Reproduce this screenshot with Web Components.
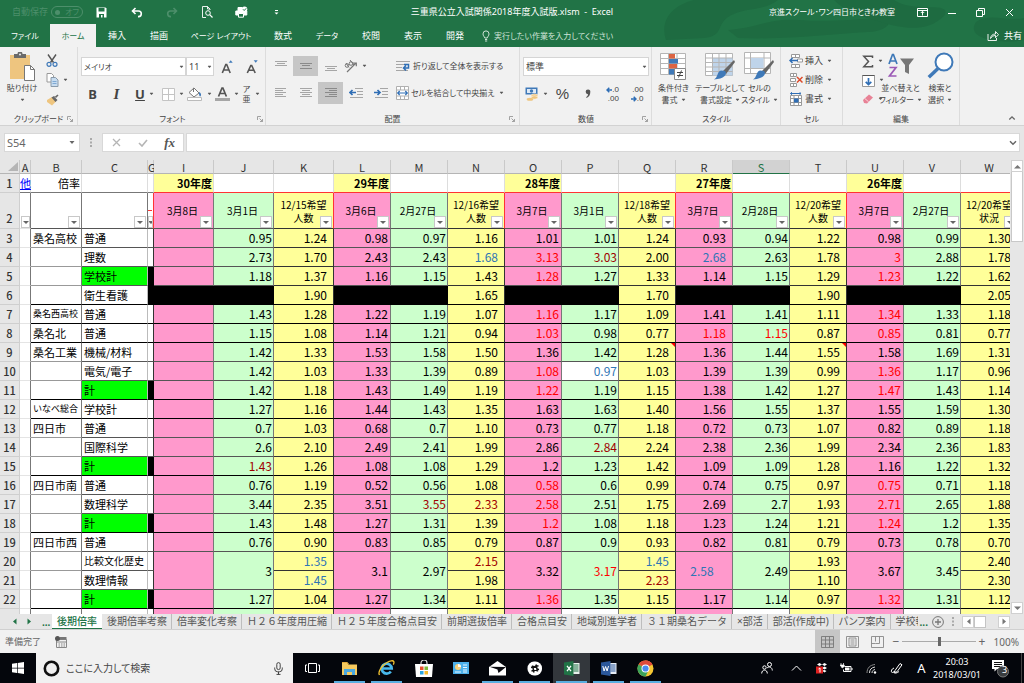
<!DOCTYPE html>
<html lang="ja">
<head>
<meta charset="utf-8">
<title>三重県公立入試関係2018年度入試版.xlsm - Excel</title>
<style>
  html, body { margin: 0; height: 100%; }
  body { overflow: hidden; font-family: "Noto Sans", "Noto Sans CJK JP", sans-serif; font-size: 9px; line-height: 12px; color: #444; font-feature-settings: "palt"; }
</style>
</head>
<body>
<excel-desktop></excel-desktop>
<script>
const BASE = `<style>
*{box-sizing:border-box}
button,input,select{font:inherit;color:inherit;font-feature-settings:inherit;margin:0;padding:0;border:0;background:none;border-radius:0;outline:0;line-height:inherit}
button{display:flex;align-items:center;justify-content:center}
select{appearance:none}
a{color:inherit;text-decoration:none}
x-icon{flex:none}
</style>`;
function define(name, css, html, setup) {
  customElements.define(name, class extends HTMLElement {
    constructor() {
      super();
      this.attachShadow({ mode: 'open' });
    }
    connectedCallback() {
      const markup = typeof html === 'function' ? html(this) : html;
      this.shadowRoot.innerHTML = BASE + `<style>${css}</style>` + markup;
      if (setup) setup(this, this.shadowRoot);
    }
  });
}

/* ---------- icons: [width, height, body] ---------- */
const ln = (ys, g = '#a6a6a6') => ys.map(([a, b, y]) => `<path d="M${a} ${y}.5H${b}" stroke="${g}"/>`).join('');
const ICONS = {
  save: [11, 11, '<path d="M.5.5h9l1 1v9H.5z" fill="#fff"/><path d="M2.500 1h6v3.500h-6zM3 7h5v4H3z" fill="#217346"/><path d="M5 8h1.500v2.500H5z" fill="#fff"/>'],
  undo: [12, 11, '<path d="M4.500 1 1.500 4l3 3M2 4h5.500a2.800 2.800 0 0 1 0 5.600H7" fill="none" stroke="#fff" stroke-width="1.600"/>'],
  redo: [12, 11, '<path d="M7.500 1l3 3-3 3M10 4H4.500a2.800 2.800 0 0 0 0 5.600H5" fill="none" stroke="#4d8f6b" stroke-width="1.600"/>'],
  preview: [12, 12, '<path d="M5 11.500H1.500V.5h5l2.500 2.500v1M6.500.5V3H9" fill="none" stroke="#fff" stroke-width=".9"/><circle cx="7" cy="7" r="2.300" fill="none" stroke="#fff"/><path d="M8.700 8.700l2.800 2.800" stroke="#fff" stroke-width="1.200"/>'],
  print: [13, 12, '<path d="M3 5V1.500h4V5M.8 5h11v4H.8z" fill="#fff" stroke="#fff"/><path d="M3.500 7.500h5v3.700h-5z" fill="#217346" stroke="#fff"/><circle cx="9.500" cy="3.300" r="2.800" fill="#fff"/><path d="M8 3.300l1.200 1.200 2-2.200" fill="none" stroke="#217346"/>'],
  more: [7, 7, '<path d="M2 1.500h3" stroke="#fff"/><path d="M1.500 3.500h4l-2 2z" fill="#fff"/>'],
  ribbonopt: [11, 9, '<path d="M.5.5h10v8H.5zM.5 2.500h10M5.500 7.500v-4M3.800 5l1.700-1.700L7.200 5" fill="none" stroke="#fff"/>'],
  min: [9, 9, '<path d="M1 5.500h8" stroke="#fff"/>'],
  restore: [9, 9, '<path d="M.5 2.500h6v6h-6zM2.500 2.500V.5h6v6h-2" fill="none" stroke="#fff"/>'],
  close: [9, 9, '<path d="M1 1l7 7M8 1L1 8" stroke="#fff"/>'],
  lamp: [8, 12, '<path d="M2.800 8C2.500 6.500 1 6 1 3.900a3 3 0 0 1 6 0C7 6 5.500 6.500 5.200 8zM3 9.500h2.200M3 11h2.200" fill="none" stroke="#cfe3d7"/>'],
  share: [12, 11, '<path d="M1 4v6.500h8.500V8M3.500 8.500c.5-3 2-4.500 5-4.500V1.500l3 3.200-3 3V5.500c-2 0-3.800.8-5 3z" fill="none" stroke="#fff" stroke-width=".9"/>'],
  caret: [5, 4, '<path d="M1 1h3L2.500 2.800z" fill="#555" stroke="#555" stroke-width=".5"/>'],
  bigcaret: [6, 5, '<path d="M.5 1h5L3 4z" fill="#666"/>'],
  chev: [8, 6, '<path d="M1 1.300l3 3 3-3" fill="none" stroke="#666" stroke-width="1.500"/>'],
  chevup: [8, 6, '<path d="M1.300 4.500l2.700-2.700 2.700 2.700" fill="none" stroke="#666" stroke-width="1.300"/>'],
  launch: [6, 6, '<path d="M.5 4V.5H4M2.500 2.500l3 3M5.500 3v2.500H3" fill="none" stroke="#999" stroke-width=".9"/>'],
  paste: [26, 29, '<path d="M1 3h20v24H1z" fill="#eec57f"/><path d="M5 2h3.500a2.500 2.500 0 0 1 5 0H17v4H5z" fill="#6a6a6a"/><circle cx="11" cy="2.500" r="1" fill="#f1f1f1"/><path d="M15.500 13.500h6l4 4v11h-10z" fill="#fff" stroke="#777"/><path d="M21.500 13.500v4h4" fill="none" stroke="#777"/>'],
  cut: [12, 13, '<path d="M2 .5l5.500 8M10 .5L4.500 8.500" stroke="#555" stroke-width="1.400"/><circle cx="3" cy="10.300" r="2" fill="none" stroke="#3f79b8" stroke-width="1.200"/><circle cx="9" cy="10.300" r="2" fill="none" stroke="#3f79b8" stroke-width="1.200"/>'],
  copy: [13, 14, '<path d="M1 .5h4.500l2 2V9H1z" fill="#fff" stroke="#999"/><path d="M5 4.500h4.500l2.500 2.500v6.500H5z" fill="#c7dcf0" stroke="#8a9aa9"/><path d="M6.500 8.500h4M6.500 10.500h4" stroke="#7fa9d3"/>'],
  brush: [13, 12, '<path d="M1 6l5-3 4 4.500L6 11.500 1 8z" fill="#eec57f"/><path d="M5.500 3.500L8 2l2 2 2.500-2.500-1-1L8.500 3l3 3-2 2z" fill="#666"/>'],
  growA: [12, 14, '<path d="M1.300 13L4.800 4.500h.9L9.200 13M2.500 10h5.500" fill="none" stroke="#555" stroke-width="1.600"/><path d="M7.700 2.800l2-2.500 2 2.500z" fill="#3f79b8"/>'],
  shrinkA: [12, 14, '<path d="M1.300 13L4.800 5.500h.9L9.200 13M2.500 10.300h5.500" fill="none" stroke="#555" stroke-width="1.600"/><path d="M7.700.3h4l-2 2.500z" fill="#3f79b8"/>'],
  borders: [13, 13, '<path d="M.5.5h12v12H.5zM6.500.5v12M.5 6.500h12" fill="#fff" stroke="#c4c4c4"/>'],
  fill: [16, 14, '<path d="M2 5.500L7 1l5 5-5 4z" fill="#fff" stroke="#777"/><path d="M6.500 5V.8" stroke="#777"/><path d="M12 5c2.500 1 2.500 4 1 4.500C12 9 12 7 12 5z" fill="#3f79b8"/><path d="M.5 10.500h14v3H.5z" fill="#fff" stroke="#bbb"/>'],
  fontA: [15, 14, '<path d="M3.500 9.500L7 1h.9l3.500 8.500M4.700 6.500h5.500" fill="none" stroke="#555" stroke-width="1.700"/><path d="M0 11h15v3H0z" fill="#a6a6a6"/>'],
  vtop: [12, 12, ln([[0, 12, 1], [2, 10, 3], [0, 12, 5]])],
  vmid: [12, 12, ln([[0, 12, 3], [2, 10, 5], [0, 12, 8]], '#8a8a8a')],
  vbot: [12, 12, ln([[0, 12, 6], [2, 10, 8], [0, 12, 10]])],
  left: [12, 12, ln([[0, 11, 1], [0, 8, 3], [0, 11, 5], [0, 8, 7], [0, 11, 9]])],
  center: [12, 12, ln([[0, 12, 1], [2, 10, 3], [0, 12, 5], [2, 10, 7], [0, 12, 9]])],
  right: [12, 12, ln([[0, 12, 1], [4, 12, 3], [0, 12, 5], [4, 12, 7], [0, 12, 9]], '#8a8a8a')],
  orient: [14, 14, '<path d="M3 13L12 4M9 4h3.300v3.300" fill="none" stroke="#777" stroke-width="1.200"/><circle cx="3" cy="6.500" r="1.800" fill="none" stroke="#777"/><path d="M5 8.500L2 4M6 1l4 5" stroke="#777"/><circle cx="7" cy="4.500" r="1.800" fill="none" stroke="#777"/>'],
  outdent: [14, 12, ln([[6, 14, 1], [8, 14, 4], [8, 14, 7], [1, 14, 10]]) + '<path d="M1 5.500h6M3.500 3L1 5.500 3.500 8" fill="none" stroke="#2f6eb5" stroke-width="1.700"/>'],
  indent: [14, 12, ln([[6, 14, 1], [8, 14, 4], [8, 14, 7], [1, 14, 10]]) + '<path d="M0 5.500h6M3.500 3L6 5.500 3.500 8" fill="none" stroke="#2f6eb5" stroke-width="1.700"/>'],
  wrap: [15, 12, ln([[0, 14, 1], [0, 8, 4], [0, 6, 7], [0, 12, 10]]) + '<path d="M8 4.500h4.500V8H8M10 5.500L7.500 8 10 10.500" fill="none" stroke="#2f6eb5" stroke-width="1.500"/>'],
  merge: [13, 14, '<path d="M.5.5h12v13H.5zM.5 4h12M.5 10h12M4.500.5V4M8.500.5V4M4.500 10v3.500M8.500 10v3.500" fill="#fff" stroke="#b0b0b0"/><path d="M2 7h9M3.700 5L1.700 7l2 2M9.300 5l2 2-2 2" fill="none" stroke="#2f6eb5" stroke-width="1.200"/>'],
  money: [14, 14, '<path d="M.5.5h12v7H.5z" fill="#3f79b8"/><path d="M2 2h9v4H2z" fill="#dfeaf6"/><circle cx="6.500" cy="4" r="1.700" fill="#3f79b8"/><ellipse cx="9.500" cy="8.500" rx="3.300" ry="1.700" fill="#eec57f" stroke="#fff" stroke-width=".5"/><ellipse cx="9.500" cy="10.500" rx="3.300" ry="1.700" fill="#eec57f" stroke="#fff" stroke-width=".5"/><ellipse cx="5" cy="12.300" rx="3.300" ry="1.500" fill="#eec57f"/>'],
  comma: [8, 12, '<path d="M4 1.500a2.300 2.300 0 0 1 2.300 2.600C6.300 7 5 9 2.500 10l-.3-1C3.500 8.200 4 7.300 4 6.200A2.350 2.350 0 1 1 4 1.500z" fill="#555"/>'],
  arrl: [6, 6, '<path d="M1 3h5M3.300.8L1 3l2.300 2.200" fill="none" stroke="#2f6eb5" stroke-width="1.500"/>'],
  arrr: [6, 6, '<path d="M0 3h5M2.700.8L5 3 2.700 5.200" fill="none" stroke="#2f6eb5" stroke-width="1.500"/>'],
  cond: [27, 28, '<path d="M.5 1.500h25v21H.5zM.5 6.500h25M.5 11.500h25M.5 16.500h25M8.500 1.500v21M17 1.500v21" fill="#fff" stroke="#b5b5b5"/><path d="M9 2h6v4.500H9zM9 12h8v4.500H9z" fill="#dc6443"/><path d="M9 7h9v4.500H9zM9 17h5v5.500H9z" fill="#3f79b8"/><path d="M14.500 16.500h11v11h-11z" fill="#fff" stroke="#888"/><path d="M17 20.500h6M17 23.500h6M21.500 18.500L18.500 25.500" stroke="#444"/>'],
  tbl: [31, 29, '<path d="M.5 1.500h27v22H.5z" fill="#fff" stroke="#b5b5b5"/><path d="M7.500 6h20v17.500h-20z" fill="#bfd4ea"/><path d="M.5 6h27M.5 10.500h27M.5 15h27M.5 19.500h27M7.500 1.500v22M14 1.500v22M21 1.500v22" stroke="#b5b5b5" fill="none"/><path d="M18 19L29 8l1 2-9 12z" fill="#666"/><path d="M20 19c3 3-1 8-11 8.500 4-2 3-8 7-9z" fill="#3f79b8"/>'],
  cellst: [31, 29, '<path d="M.5.5h26v21H.5zM.5 6h26M.5 16.500h26M6.500.5v21M20 .5v21" fill="#fff" stroke="#b5b5b5"/><path d="M7 6h12.500v10H7z" fill="#bfd4ea"/><path d="M18 19L29 8l1 2-9 12z" fill="#666"/><path d="M20 19c3 3-1 8-11 8.500 4-2 3-8 7-9z" fill="#3f79b8"/>'],
  insert: [14, 14, '<path d="M2.500.5h8v3h-8zM6.500.5v3M2.500 10.500h8v3h-8zM6.500 10.500v3M8.500 5h5v3h-5z" fill="#fff" stroke="#999"/><path d="M1 6.500h8M3.500 4L1 6.500 3.500 9" fill="none" stroke="#2f6eb5" stroke-width="1.500"/>'],
  delete: [14, 14, '<path d="M1.500.5h6v3h-6zM4.500.5v3M1.500 10.500h6v3h-6zM4.500 10.500v3M1.500 5.500h5v3h-5z" fill="#fff" stroke="#999"/><path d="M8 4l5.500 5.500M13.500 4L8 9.500" stroke="#dc4b2b" stroke-width="1.500"/>'],
  format: [14, 14, '<path d="M1.500 3.500h11v10h-11zM1.500 6.500h11M1.500 10.500h11M5 3.500v10M9.500 3.500v10" fill="#fff" stroke="#999"/><path d="M5 6.500h4.500v4H5z" fill="#2f6eb5"/><path d="M1.500 1.500h10M3 .2L1.500 1.500 3 2.800M10.500.2L12 1.500l-1.500 1.300" stroke="#2f6eb5" fill="none"/>'],
  sigma: [12, 13, '<path d="M10.500 3V1.200H1.800l4.700 5.300-4.700 5.300h8.700V10" fill="none" stroke="#555" stroke-width="1.500"/>'],
  filldown: [13, 13, '<path d="M.5 1.500h12v11H.5z" fill="#fff" stroke="#999"/><path d="M.5 1.500h12" stroke="#555"/><path d="M6.500 4v6.500M3.700 7.800l2.800 2.700 2.800-2.700" fill="none" stroke="#2f6eb5" stroke-width="1.700"/>'],
  erase: [12, 12, '<path d="M1 7l6-5.500 4 3L5 10.500 2 10z" fill="#e88296"/><path d="M2.800 5.500l3.800 3.300" stroke="#fbd5dc"/>'],
  sort: [28, 28, '<path d="M2 12L5.500 2.500h.9L10 12M3.200 9h5.500" fill="none" stroke="#3f79b8" stroke-width="1.700"/><path d="M2.500 15.500h6.500L2.500 24h7" fill="none" stroke="#9b59b6" stroke-width="1.700"/><path d="M13 6.500h14L22 13v9l-4-2v-7z" fill="#777"/>'],
  find: [27, 27, '<circle cx="17" cy="10" r="8.500" fill="#fff" stroke="#3f79b8" stroke-width="2"/><path d="M11 16.500L1.800 25.300" stroke="#3f79b8" stroke-width="3.500"/>'],
  x: [9, 9, '<path d="M1 1l7 7M8 1L1 8" stroke="#b5b5b5" stroke-width="1.300"/>'],
  check: [10, 8, '<path d="M1 4l3 3 5-6" fill="none" stroke="#b5b5b5" stroke-width="1.600"/>'],
  dots: [2, 9, '<path d="M0 0h2v2H0zM0 3.500h2v2H0zM0 7h2v2H0z" fill="#aaa"/>'],
  filt: [6, 5, '<path d="M0 1h6L3 4z" fill="#666"/>'],
  up: [7, 5, '<path d="M0 4.500h7L3.500 1z" fill="#777"/>'],
  down: [7, 5, '<path d="M0 .5h7L3.500 4z" fill="#777"/>'],
  prev: [5, 7, '<path d="M4.500.5v6L1 3.500z" fill="currentColor"/>'],
  next: [5, 7, '<path d="M.5.5v6L4 3.500z" fill="currentColor"/>'],
  plus: [12, 12, '<circle cx="6" cy="6" r="5.400" fill="none" stroke="#777"/><path d="M3 6h6M6 3v6" stroke="#777" stroke-width="1.300"/>'],
  macro: [12, 12, '<path d="M1.500 3.500h10v8h-10zM1.500 6h10M3.500 8h1.500M6 8h1.500M8.500 8H10M3.500 10h1.500M6 10h1.500M8.500 10H10" fill="none" stroke="#888"/><path d="M4.500 1h7v2.500h-7z" fill="#777"/><circle cx="2.500" cy="2.500" r="2.500" fill="#555"/>'],
  vnormal: [13, 12, '<path d="M.5.5h12v11H.5zM.5 4h12M.5 8h12M4.500.5v11M8.500.5v11" fill="none" stroke="#777" stroke-width=".9"/>'],
  vpage: [13, 12, '<path d="M.5.5h12v11H.5zM3 2h7v8H3zM4.500 4h4M4.500 6h4M4.500 8h4" fill="none" stroke="#888" stroke-width=".9"/>'],
  vbreak: [13, 12, '<path d="M.5.5h12v11H.5zM4.500.5v5M4.500 7.500h4M8.500.5v7M.5 7.500h4" fill="none" stroke="#888" stroke-width=".9"/>'],
  win: [12, 12, '<path d="M0 1.800l5-.7v4.600H0zM5.700 1L12 .1v5.600H5.700zM0 6.400h5V11l-5-.7zM5.700 6.400H12V12l-6.300-.9z" fill="#fff"/>'],
  cortana: [17, 17, '<circle cx="8.500" cy="8.500" r="6.700" fill="none" stroke="#111" stroke-width="2.600"/>'],
  mic: [9, 13, '<rect x="2.800" y=".6" width="3.400" height="7" rx="1.700" fill="none" stroke="#444"/><path d="M.7 5.500v1.300a3 3 0 0 0 3 3h1.600a3 3 0 0 0 3-3V5.500M4.500 10v2.500M2.500 12.400h4" fill="none" stroke="#444"/>'],
  taskview: [15, 12, '<path d="M3.500 1.500h8v9h-8zM2 3H.5v6.500H2M13 3h1.500v6.500H13" fill="none" stroke="#fff"/>'],
  explorer: [17, 15, '<path d="M1 2h5.500l1 1.500H16V14H1z" fill="#f5c95e"/><path d="M1 1.500h5.500L7.500 3" fill="none" stroke="#e0a93b"/><path d="M3 14V8h11v6h-3v-3H6v3z" fill="#4aa8e0"/>'],
  ie: [17, 16, '<path d="M3.300 8.500h10.400A5 5 0 1 0 12.800 11.500" fill="none" stroke="#48b8ec" stroke-width="2.700"/><path d="M1.500 15C-.5 12 4 5 9 2.500 12 .8 15 0 15.800 1.600c.4.800 0 2-.5 3" fill="none" stroke="#f2c230" stroke-width="1.300"/>'],
  store: [18, 17, '<path d="M6 5V3a3 3 0 0 1 6 0v2" fill="none" stroke="#ddd" stroke-width="1.200"/><path d="M0 4h18l-1 13H1z" fill="#fff"/><path d="M5 6.500h3.500V10H5z" fill="#e8502f"/><path d="M9.500 6.500H13V10H9.500z" fill="#7db93a"/><path d="M5 11h3.500v3.500H5z" fill="#2ca4e0"/><path d="M9.500 11H13v3.500H9.500z" fill="#f4b92b"/>'],
  card: [16, 12, '<path d="M0 0h16v12H0z" fill="#4db0ea"/><circle cx="5" cy="5" r="3" fill="#f7d17c"/><path d="M5 2a3 3 0 0 1 3 3H5z" fill="#fff"/><path d="M2 10h6M10 3h4M10 5.500h4M10 8h4M10 10h4" stroke="#e8f6ff"/>'],
  mail: [19, 15, '<path d="M1 6l8.500-6L18 6v8.500H1z" fill="#fff"/><path d="M1.500 5.800l16.500.2-7.500 6-1-3.500z" fill="#0a0a10"/>'],
  slack: [16, 15, '<rect x=".5" y=".5" width="14.500" height="14" rx="6.500" fill="#fff"/><path d="M5.500 4.500l1.500 7M9 3.500l1.500 7M4 6.500l7.500-1.700M4.500 10l7.500-1.700" stroke="#111" stroke-width="1.500"/>'],
  excel: [16, 15, '<path d="M8 2h7.500v11H8z" fill="#e8f1ec"/><path d="M9.500 4h5M9.500 6h5M9.500 8h5M9.500 10h5" stroke="#217346"/><path d="M0 1.500L9.500 0v15L0 13.500z" fill="#217346"/><path d="M3 4.800l4 5.400M7 4.800l-4 5.400" stroke="#fff" stroke-width="1.300"/>'],
  word: [16, 15, '<path d="M8 2h7.500v11H8z" fill="#e8edf6"/><path d="M9.500 4h5M9.500 6h5M9.500 8h5M9.500 10h5" stroke="#2b579a"/><path d="M0 1.500L9.500 0v15L0 13.500z" fill="#2b579a"/><path d="M1.800 5l1.300 5 1.500-4.500 1.500 4.500L7.500 5" fill="none" stroke="#fff"/>'],
  chrome: [17, 17, '<circle cx="8.500" cy="8.500" r="8" fill="#f6c733"/><path d="M8.500 8.500L1.570 4.500A8 8 0 0 1 15.430 4.500z" fill="#de4b3b"/><path d="M8.500 8.500L1.570 4.500A8 8 0 0 0 8.500 16.500l3-6z" fill="#3da35a"/><path d="M8.500 4.500h6.930A8 8 0 0 0 8.500.5z" fill="#de4b3b"/><circle cx="8.500" cy="8.500" r="4" fill="#fff"/><circle cx="8.500" cy="8.500" r="3.100" fill="#4a8af0"/>'],
  people: [12, 12, '<circle cx="3.500" cy="5.500" r="1.700" fill="none" stroke="#fff"/><path d="M.7 11.500c0-4.500 5.600-4.500 5.600 0" fill="none" stroke="#fff"/><circle cx="8.500" cy="2.500" r="2" fill="none" stroke="#fff"/><path d="M6 6c2-2 5.300-.8 5.300 2.500" fill="none" stroke="#fff"/>'],
  trayup: [11, 6, '<path d="M1 5.500L5.500 1 10 5.500" fill="none" stroke="#fff"/>'],
  dropbox: [12, 12, '<path d="M1 2.500l2.500-1.500L6 2.500 3.500 4zM6 2.500L8.500 1 11 2.500 8.500 4zM6 6l2.500-1.500L11 6 8.500 7.500zM6 8.500l2.500-.5 2 1-2 1.500z" fill="#fff"/><path d="M0 4.500h7v7H0z" fill="#e02020"/><path d="M2.500 7l1.500-1v4.500" fill="none" stroke="#fff"/>'],
  battery: [13, 10, '<path d="M4.500 3.500H11v5H3.500V6.500" fill="none" stroke="#fff"/><path d="M5 4.500h4.500v3H5zM11.500 5h1v2h-1z" fill="#fff"/><path d="M1 0v2M3.500 0v2M.2 2h4v1.500L2.200 5z" stroke="#fff" fill="#fff" stroke-width=".7"/>'],
  wifi: [11, 11, '<circle cx="9" cy="9.500" r="1.200" fill="#fff"/><path d="M6 10c0-2 1-3 3-3.500M3.500 10c0-3.500 2-5.500 5.500-6" fill="none" stroke="#ddd"/><path d="M1 10C1 5 4 2 9 1.500" fill="none" stroke="#888"/>'],
  pen: [13, 12, '<path d="M5 8.500l5-7 2 1.300-5 7-2.500.7z" fill="none" stroke="#fff"/><path d="M4 6C1 7 .5 10.500 2.500 10.500S5 7.500 4 10c-.5 1.500 3 1.500 5-.5" fill="none" stroke="#fff"/>'],
  notif: [19, 19, '<path d="M1 1h12v9H6l-2.500 2.500V10H1z" fill="#fff"/><path d="M3 3.500h8M3 5.500h8M3 7.500h6" stroke="#111"/><circle cx="12" cy="12.500" r="5.500" fill="#3a3d40" stroke="#777"/>'],
};
define('x-icon', ':host{display:inline-flex}svg{display:block}', el => {
  const [w, h, body] = ICONS[el.getAttribute('name')];
  return `<svg width="${w}" height="${h}" viewBox="0 0 ${w} ${h}" aria-hidden="true">${body}</svg>`;
});
const ic = n => `<x-icon name="${n}"></x-icon>`;

/* ---------- title bar ---------- */
define('title-bar', `
:host{display:grid;grid-template-columns:1fr auto 1fr;align-items:center;height:24px;background:#217346;color:#fff;position:relative}
.art{position:absolute;right:0;top:0}
.l,.r{display:flex;align-items:center;position:relative}
.l{padding-left:12px;color:#4d8f6b}
label{display:flex;align-items:center;gap:3px}
.sw{display:flex;align-items:center;gap:5px;height:12px;border:1px solid #4d8f6b;border-radius:6px;padding:0 3px;font-size:8px}
.sw input{appearance:none;width:5px;height:5px;border-radius:50%;background:#4d8f6b}
.q{display:grid;grid-template-columns:repeat(6,35px);margin-left:1px}
button{height:24px}
.r{justify-content:end;font-size:8px}
.r span{margin-right:13px}
.r button{width:29px;height:22px}
h1{margin:0;font:inherit;position:relative;white-space:pre}
`, `<svg class="art" width="370" height="48" viewBox="0 0 370 48" aria-hidden="true"><g fill="#1e6b41"><path d="M12 40C6 22 16 6 40 0h84c-12 10-30 8-44 14-20 8-8 22-30 24z"/><path d="M74 30c30-2 40-12 70-10s50 0 80-2c20 0 10 14-10 14-40 2-80 8-130 6z"/><path d="M180 0h60c20 14 60 0 50 16-20 20-50 10-70 4s-30-10-40-20zM322 22c14-10 30 0 48-4v22c-20 4-60 0-48-18z"/></g></svg>
<div class="l"><label>自動保存<span class="sw"><input type="checkbox">オフ</span></label>
<div class="q">${['save', 'undo', 'redo', 'preview', 'print', 'more'].map(n => `<button aria-label="${n}">${ic(n)}</button>`).join('')}</div></div>
<h1>三重県公立入試関係2018年度入試版.xlsm  -  Excel</h1>
<div class="r"><span>京進スクール･ワン四日市ときわ教室</span>${['ribbonopt', 'min', 'restore', 'close'].map(n => `<button aria-label="${n}">${ic(n)}</button>`).join('')}</div>`);

define('ribbon-tabs', `
:host{display:block;color:#fff;height:23px;position:relative}
nav{display:flex;height:23px;align-items:stretch}
a{display:flex;align-items:center;justify-content:center;width:42px;white-space:nowrap}
.w,.f,.d,.tell{font-size:8px}
a.w{width:82px}a.f{width:50px}a.d{width:46px}
a.on{background:#f1f1f1;color:#217346}
.tell{width:auto;gap:4px;margin-left:6px;color:#cfe3d7}
.share{width:auto;margin-left:auto;gap:5px;padding-right:2px}
`, `<nav><a class="f" href="#">ファイル</a><a class="d on" href="#">ホーム</a><a href="#">挿入</a><a href="#">描画</a><a class="w" href="#">ページ レイアウト</a><a href="#">数式</a><a class="d" href="#">データ</a><a href="#">校閲</a><a href="#">表示</a><a href="#">開発</a><a class="tell" href="#">${ic('lamp')}実行したい作業を入力してください</a><a class="share" href="#">${ic('share')}共有</a></nav>`);

/* ---------- ribbon ---------- */
define('ribbon-group', `
:host{display:grid;grid-template-rows:64px 14px;border-right:1px solid #dcdcdc;padding-top:1px}
.foot{display:grid;grid-template-columns:1fr auto 1fr;align-items:center;padding:0 4px}
x-icon{grid-column:3;justify-self:end}
span{grid-column:2;color:#444;font-size:8px;white-space:nowrap}
`, el => `<slot></slot><div class="foot"><span>${el.getAttribute('label')}</span>${el.hasAttribute('launch') ? ic('launch') : ''}</div>`);

define('tool-button', `
:host{display:flex}
button{flex:1;gap:2px;white-space:nowrap;padding:0}
:host([on]) button{background:#c6c6c6}
:host([big]) button{flex-direction:column;justify-content:start;gap:0;padding-top:4px;font-size:8px}
.pic{display:flex;height:30px;align-items:start}
.t{display:flex;align-items:center;gap:3px;height:12px}
.drop{margin-left:2px}
`, el => {
  const i = el.getAttribute('icon'), c = el.hasAttribute('drop');
  if (el.hasAttribute('big')) {
    const [a, b] = el.getAttribute('big').split('|');
    return `<button><span class="pic">${ic(i)}</span><span class="t">${a}</span><span class="t">${b || ''}${ic('caret')}</span></button>`;
  }
  return `<button aria-label="${i || ''}">${i ? ic(i) : ''}<slot></slot>${c ? `<x-icon class="drop" name="caret"></x-icon>` : ''}</button>`;
});

define('pick-box', `
:host{display:flex;position:relative;height:19px;background:#fff;border:1px solid #d5d5d5}
select{flex:1;min-width:0;padding-left:2px;font-size:9px}
:host([small]) select{font-size:8px}
x-icon{position:absolute;right:1px;top:7px;pointer-events:none}
`, el => `<select aria-label="${el.getAttribute('label')}"><option>${el.getAttribute('value')}</option></select>${ic('caret')}`);

define('ribbon-bar', `
:host{display:flex;height:79px;background:#f1f1f1;border-bottom:1px solid #d2d2d2;position:relative}
.clip{display:grid;grid-template-columns:44px 31px}
.clip>div{display:grid;grid-template-rows:repeat(3,20px);align-content:center;justify-items:start;padding-left:2px}
.two{display:grid;grid-template-rows:19px 24px;row-gap:6px;padding:9px 3px 0;align-content:start}
.row{display:flex;align-items:stretch}
.al{display:grid;grid-template-columns:repeat(5,25px) 1fr;grid-template-rows:20px 22px;row-gap:6px;padding:8px 3px 0 2px;align-content:start}
.al tool-button{align-self:stretch}
.txt{justify-self:start;margin-left:3px;font-size:8px}
b,i,u{font-size:13px}u{font-weight:bold}i{font-family:"Liberation Serif",serif;font-weight:bold;font-size:15px}
.ruby{display:grid;font-size:8px;line-height:10px;text-align:center}
.dec{display:grid;font-family:"Liberation Sans",sans-serif;font-size:8px;line-height:9px;justify-items:end}
.dec span{display:flex;align-items:center}
.pct{font-size:15px;font-family:"Liberation Sans",sans-serif}
.big{display:flex}
.big tool-button{width:43px}
.rows{display:grid;grid-template-rows:repeat(3,19px);align-content:center;justify-content:start;padding-left:8px}
.rows tool-button{justify-self:start}
.tools{width:36px}
.up{position:absolute;right:8px;bottom:4px}
`, `
<ribbon-group label="クリップボード" launch style="width:78px"><div class="clip"><tool-button icon="paste" big="貼り付け"></tool-button><div><tool-button icon="cut"></tool-button><tool-button icon="copy" drop></tool-button><tool-button icon="brush"></tool-button></div></div></ribbon-group>
<ribbon-group label="フォント" launch style="width:188px"><div class="two">
<div class="row"><pick-box small label="フォント" value="メイリオ" style="width:105px"></pick-box><pick-box label="サイズ" value="11" style="width:28px"></pick-box><tool-button icon="growA" style="width:25px"></tool-button><tool-button icon="shrinkA" style="width:25px"></tool-button></div>
<div class="row"><tool-button style="width:23px"><b>B</b></tool-button><tool-button style="width:25px"><i>I</i></tool-button><tool-button drop style="width:31px"><u>U</u></tool-button><tool-button icon="borders" drop style="width:26px"></tool-button><tool-button icon="fill" drop style="width:27px"></tool-button><tool-button icon="fontA" drop style="width:27px"></tool-button><tool-button drop style="width:22px"><span class="ruby"><span>ア</span><span>亜</span></span></tool-button></div>
</div></ribbon-group>
<ribbon-group label="配置" launch style="width:254px"><div class="al">
<tool-button icon="vtop"></tool-button><tool-button icon="vmid" on></tool-button><tool-button icon="vbot"></tool-button><tool-button icon="orient" drop></tool-button><span></span><tool-button class="txt" icon="wrap">折り返して全体を表示する</tool-button>
<tool-button icon="left"></tool-button><tool-button icon="center"></tool-button><tool-button icon="right" on></tool-button><tool-button icon="outdent"></tool-button><tool-button icon="indent"></tool-button><tool-button class="txt" icon="merge" drop>セルを結合して中央揃え</tool-button>
</div></ribbon-group>
<ribbon-group label="数値" launch style="width:132px"><div class="two">
<pick-box label="表示形式" value="標準"></pick-box>
<div class="row"><tool-button icon="money" drop style="width:27px"></tool-button><tool-button style="width:25px"><span class="pct">%</span></tool-button><tool-button icon="comma" style="width:25px"></tool-button><tool-button style="width:25px"><span class="dec"><span>${ic('arrl')}.0</span><span>.00</span></span></tool-button><tool-button style="width:24px"><span class="dec"><span>.00</span><span>${ic('arrr')}.0</span></span></tool-button></div>
</div></ribbon-group>
<ribbon-group label="スタイル" style="width:129px"><div class="big"><tool-button icon="cond" big="条件付き|書式"></tool-button><tool-button icon="tbl" big="テーブルとして|書式設定"></tool-button><tool-button icon="cellst" big="セルの|スタイル"></tool-button></div></ribbon-group>
<ribbon-group label="セル" style="width:62px"><div class="rows"><tool-button icon="insert" drop>挿入</tool-button><tool-button icon="delete" drop>削除</tool-button><tool-button icon="format" drop>書式</tool-button></div></ribbon-group>
<ribbon-group label="編集" style="width:117px"><div class="big"><div class="rows tools"><tool-button icon="sigma" drop></tool-button><tool-button icon="filldown" drop></tool-button><tool-button icon="erase" drop></tool-button></div><tool-button icon="sort" big="並べ替えと|フィルター"></tool-button><tool-button icon="find" big="検索と|選択" style="width:36px"></tool-button></div></ribbon-group>
<button class="up" aria-label="リボンを折りたたむ">${ic('chevup')}</button>`);

/* ---------- formula bar ---------- */
define('formula-bar', `
:host{display:flex;height:34px;background:#e6e6e6;padding:7px 4px 8px;align-items:stretch}
.name{position:relative;width:76px;background:#fff;border:1px solid #d8d8d8;display:flex}
.name input{width:60px;padding-left:2px;font-size:11px;color:#666}
.name x-icon{position:absolute;right:4px;top:6px}
.dots{align-self:center;margin:0 10px}
.fx{display:flex;width:82px;background:#fff;border:1px solid #d8d8d8}
.fx button{flex:1}
i{font:italic bold 13px "Liberation Serif",serif;color:#555}
.in{flex:1;display:flex;align-items:center;background:#fff;border:1px solid #d8d8d8;margin-left:2px;padding-right:2px}
.in input{flex:1}
`, `<div class="name"><input aria-label="名前ボックス" value="S54">${ic('bigcaret')}</div><x-icon class="dots" name="dots"></x-icon><div class="fx"><button aria-label="キャンセル">${ic('x')}</button><button aria-label="入力">${ic('check')}</button><button aria-label="関数の挿入"><i>fx</i></button></div><div class="in"><input aria-label="数式バー">${ic('chev')}</div>`);

/* ---------- worksheet ---------- */
const COLS = [['A', 11], ['B', 51], ['C', 66], ['G', 6], ['I', 60], ['J', 60], ['K', 60], ...'LMNOPQRSTUVW'.split('').map(c => [c, 57])];
const DATES = ['3月8日', '3月1日', '12/15希望|人数', '3月6日', '2月27日', '12/16希望|人数', '3月7日', '3月1日', '12/18希望|人数', '3月7日', '2月28日', '12/20希望|人数', '3月7日', '2月27日', '12/20希望|状況'];
/* suffixes: r red, d dark red, b blue, w white fill, n note, m merged over two rows, c centred; "#" solid black, "-" blank, "_" covered by a merge */
const ROWS = [
  ['桑名高校', '普通', '- 0.95 1.24 0.98 0.97 1.16 1.01 1.01 1.24 0.93 0.94 1.22 0.98 0.99 1.30'],
  ['', '理数', '- 2.73 1.70 2.43 2.43 1.68b 3.13r 3.03d 2.00 2.68b 2.63 1.78 3r 2.88 1.78'],
  ['', '学校計*', '- 1.18 1.37 1.16 1.15 1.43 1.28r 1.27 1.33 1.14 1.15 1.29 1.23r 1.22 1.62'],
  ['', '衛生看護', '# # 1.90 # # 1.65 # # 1.70 # # 1.90 # # 2.05', 1],
  ['桑名西高校', '普通', '- 1.43 1.28 1.22 1.19 1.07 1.16r 1.17 1.09 1.41 1.41 1.11 1.34r 1.33 1.18', 1],
  ['桑名北', '普通', '- 1.15 1.08 1.14 1.21 0.94 1.03r 0.98 0.77 1.18r 1.15r 0.87 0.85r 0.81 0.77', 1],
  ['桑名工業', '機械/材料', '- 1.42 1.33 1.53 1.58 1.50 1.36 1.42 1.28n 1.36 1.44 1.55n 1.58 1.69 1.31'],
  ['', '電気/電子', '- 1.42 1.03 1.33 1.39 0.89 1.08r 0.97bw 1.03 1.39 1.39 0.99 1.36r 1.17 0.96'],
  ['', '計*', '- 1.42 1.18 1.43 1.49 1.19 1.22r 1.19 1.15 1.38 1.42 1.27 1.47r 1.43 1.14', 1],
  ['いなべ総合', '学校計', '- 1.27 1.16 1.44 1.43 1.35 1.63 1.63 1.40 1.56 1.55 1.37 1.55 1.59 1.30', 1],
  ['四日市', '普通', '- 0.7 1.03 0.68 0.7 1.10 0.73 0.77 1.18 0.72 0.73 1.07 0.82 0.89 1.18'],
  ['', '国際科学', '- 2.6 2.10 2.49 2.41 1.99 2.86 2.84d 2.24 2.38 2.36 1.99 2.34 2.36 1.83'],
  ['', '計*', '- 1.43d 1.26 1.08 1.08 1.29 1.2 1.23 1.42 1.09 1.09 1.28 1.16 1.22 1.32', 1],
  ['四日市南', '普通', '- 0.76 1.19 0.52 0.56 1.08 0.58r 0.6 0.99 0.74 0.75 0.97 0.75r 0.71 1.18'],
  ['', '数理科学', '- 3.44 2.35 3.51 3.55d 2.33d 2.58r 2.51 1.75 2.69 2.7 1.93 2.71r 2.65 1.88'],
  ['', '計*', '- 1.43 1.48 1.27 1.31 1.39 1.2r 1.08 1.18 1.23 1.24 1.21 1.24r 1.2 1.35', 1],
  ['四日市西', '普通', '- 0.76 0.90 0.83 0.85 0.79 0.87 0.9 0.93 0.82 0.81 0.79 0.73 0.78 0.70'],
  ['', '比較文化歴史', '-m 3m 1.35b 3.1m 2.97m 2.15d 3.32m 3.17rm 1.45b 2.58bmc 2.49m 1.93 3.67m 3.45m 2.40'],
  ['', '数理情報', '_ _ 1.45b _ _ 1.98 _ _ 2.23d _ _ 1.10 _ _ 2.30'],
  ['', '計*', '- 1.27 1.04 1.27 1.34 1.11 1.36r 1.35 1.15 1.17 1.14 0.97 1.32r 1.31 1.12', 1],
];
const TINT = ['p', 'g', 'y'];
define('sheet-grid', `
:host{display:flex;flex:1;min-height:0;background:#e6e6e6;font-family:"Noto Sans CJK JP",sans-serif;font-feature-settings:normal}
.view{flex:1;min-width:0;overflow:hidden;background:#fff}
table{table-layout:fixed;border-collapse:separate;border-spacing:0;width:1018px;color:#000}
th,td{padding:0;font-weight:400;white-space:nowrap;line-height:14px;position:relative}
thead th{height:13px;background:#e6e6e6;font-size:11px;line-height:12px;color:#333;border-right:1px solid #c9c9c9;border-bottom:1px solid #b5b5b5}
thead th:first-child{text-align:right}
thead .sel{background:#d2d2d2;color:#217346;border-bottom-color:#217346}
tbody th{background:#e6e6e6;font-size:11px;font-weight:500;color:#333;border-bottom:1px solid #cfcfcf;border-right:1px solid #cfcfcf}
td{height:19px;border-right:1px solid #777;border-bottom:1px solid #555;font-size:12px;text-align:right}
.a{border-right-color:#777;border-bottom-color:#e4e4e4}
.b{text-align:left;padding-left:2px;font-size:11px;border-bottom-color:#999}
.b.s{font-size:9px}
.c{text-align:left;padding-left:2px;font-size:11px;border-right-color:#bbb}
.c.t{background:#0f0}
.c.l{font-size:10px}
.x{border-right-color:#333}
.x.t,.k{background:#000;border-color:#000}
.p{background:#ff99cc;padding-right:2px}.g{background:#ccffcc;padding-right:1px}.y{background:#ffff99;padding-right:6px;border-right:1px solid #333;border-bottom-color:#333}
.pad{padding-right:6px}
.end td{border-bottom-color:#000}.end .a{border-bottom-color:#e4e4e4}
td.k{background:#000;border-color:#000}
td.w{background:#fff}
.r{color:#f00}.d{color:#a00000}.bl{color:#2f75b5}
.ctr{text-align:center;padding:0 4px 0 0}
.n::after{content:"";position:absolute;right:0;top:0;border:2px solid;border-color:#f00 #f00 transparent transparent}
.r1 td{border-right-color:#ddd;border-bottom-color:#777;font-size:11px}
.r1 .rl{border-bottom:1px solid #f33}
.r1 .yr{background:#ff9;font-weight:700;padding-right:1px}
.r1 a{color:#00f;text-decoration:underline;display:block;text-align:center}
.r2 td{height:36px;font-size:10px;line-height:13px;text-align:center;padding:0 2px 0 0}
.r2 td.y{padding:0;border-right-color:#f33}
.r2 .x{border-right-color:#f33}
.r2 th{vertical-align:bottom;padding-bottom:3px}
.r2 td button{position:absolute;right:1px;bottom:0;width:12px;height:12px;background:#fff;border:1px solid #c8c8c8}
.r2 .a button{width:9px;right:0}.r2 .x button{width:5px;right:0;overflow:hidden}
.dash{position:absolute;left:0;top:17px;width:4px;height:1px;background:#f33}
.bar{width:14px;display:flex;flex-direction:column;padding-left:1px}
.bar button{height:12px;background:#fff;border:1px solid #d0d0d0;width:12px}
.bar i{width:12px;height:70px;background:#fff;border:1px solid #c8c8c8;border-top:0}
.bar button:last-child{margin-top:auto}
`, () => {
  const head = `<tr><th><svg width="20" height="12" aria-hidden="true"><path d="M18 2v9H8z" fill="#b5b5b5"/></svg></th>${COLS.map(([c]) => `<th${c === 'S' ? ' class="sel"' : ''}>${c}</th>`).join('')}</tr>`;
  const r1 = `<tr class="r1"><th>1</th><td><a href="#">他</a></td><td style="padding-right:1px">倍率</td><td></td><td></td>${DATES.map((_, i) => i % 3 ? '<td class="rl"></td>' : `<td class="rl yr">${30 - i / 3}年度</td>`).join('')}</tr>`;
  const fb = `<button aria-label="フィルター">${ic('filt')}</button>`;
  const r2 = `<tr class="r2"><th>2</th><td class="a">${fb}</td><td>${fb}</td><td>${fb}</td><td class="x"><span class="dash"></span>${fb}</td>${DATES.map((d, i) => `<td class="${TINT[i % 3]}">${d.replace('|', '<br>')}${fb}</td>`).join('')}</tr>`;
  const body = ROWS.map(([b, c, v, end], n) => {
    const t = c.endsWith('*'), blk = t || v[0] === '#';
    const cells = v.split(' ').map((s, i) => {
      if (s === '_') return '';
      if (s === '#') return '<td class="k"></td>';
      const m = s.match(/^([-\d.]+)([a-z]*)$/), f = m[2], k = [TINT[i % 3]];
      if (f.includes('r')) k.push('r');
      if (f.includes('d')) k.push('d');
      if (f.includes('b')) k.push('bl');
      if (f.includes('w')) k.push('w');
      if (f.includes('n')) k.push('n');
      if (f.includes('c')) k.push('ctr'); else if (i === 9) k.push('pad');
      return `<td class="${k.join(' ')}"${f.includes('m') ? ' rowspan="2"' : ''}>${m[1] === '-' ? '' : m[1]}</td>`;
    }).join('');
    return `<tr${end ? ' class="end"' : ''}><th>${n + 3}</th><td class="a"></td><td class="b${b.length > 4 ? ' s' : ''}">${b}</td><td class="c${t ? ' t' : ''}${c.length > 5 ? ' l' : ''}">${c.replace('*', '')}</td><td class="x${blk ? ' t' : ''}"></td>${cells}</tr>`;
  }).join('');
  const last = `<tr><th></th><td class="a"></td><td class="b"></td><td class="c"></td><td class="x"></td>${DATES.map((_, i) => `<td class="${TINT[i % 3]}${i > 3 && i % 3 === 1 ? ' w' : ''}"></td>`).join('')}</tr>`;
  return `<div class="view"><table><colgroup><col style="width:20px">${COLS.map(([, w]) => `<col style="width:${w}px">`).join('')}</colgroup><thead>${head}</thead><tbody>${r1}${r2}${body}${last}</tbody></table></div>
<div class="bar"><button aria-label="上へ">${ic('up')}</button><i></i><button aria-label="下へ">${ic('down')}</button></div>`;
});

/* ---------- sheet tabs ---------- */
define('sheet-tabs', `
:host{display:flex;height:16px;background:#e6e6e6;border-bottom:1px solid #d0d0d0;font-size:10px;line-height:14px;align-items:stretch}
.nav{display:flex;align-items:center;width:52px;color:#217346;padding-left:12px;gap:10px;flex:none}
.nav b,.el{font-size:10px;line-height:10px;color:#217346;font-weight:700}
nav{display:flex;flex:1;min-width:0;overflow:hidden}
a{flex:none;padding:0 4px 0 5px;border-right:1px solid #bdbdbd;white-space:nowrap;color:#555;height:15px}
a.on{background:#fff;color:#217346;font-weight:500;border-right:0;padding-right:5px;border-bottom:1px solid #217346}
a:last-child{border:0}
.el{margin:0 4px 0 2px}
.end{display:flex;align-items:center;flex:none}
.hs{display:flex;width:48px;margin:0 14px 0 8px}
.hs button{width:12px;height:12px;background:#fff;border:1px solid #d0d0d0;color:#777}
.hs i{width:12px;height:12px;background:#fff;border:1px solid #c4c4c4;margin-right:auto}
.dd{margin-left:8px}
`, `<div class="nav">${ic('prev')}${ic('next')}<b>...</b></div><nav>${['後期倍率', '後期倍率考察', '倍率変化考察', 'Ｈ２６年度用圧縮', 'Ｈ２５年度合格点目安', '前期選抜倍率', '合格点目安', '地域別進学者', '３１期桑名データ', '×部活', '部活(作成中)', 'パンフ案内', '学校報告'].map((t, i) => `<a href="#"${i ? (/[Ｈ３]/.test(t) ? ' style="font-feature-settings:normal"' : '') : ' class="on"'}>${t}</a>`).join('')}</nav><div class="end"><span class="el">...</span><button aria-label="新しいシート">${ic('plus')}</button><x-icon class="dd" name="dots"></x-icon><div class="hs"><button aria-label="左へ">${ic('prev')}</button><i></i><button aria-label="右へ">${ic('next')}</button></div></div>`);

define('status-bar', `
:host{display:flex;height:23px;background:#f1f1f1;align-items:center;padding:0 5px;color:#666}
.m{margin-left:14px;margin-right:auto}
.v{width:25px;height:23px}
.v.on{background:#c6c6c6}
.z{width:12px;font-size:12px;margin:0}
input{appearance:none;width:74px;height:12px;background:linear-gradient(#aaa,#aaa) center/100% 1px no-repeat}
input::-webkit-slider-thumb{appearance:none;width:3px;height:9px;background:#666}
output{width:31px;text-align:right;font-size:10px}
`, `<span>準備完了</span><x-icon class="m" name="macro"></x-icon><button class="v on" aria-label="標準">${ic('vnormal')}</button><button class="v" aria-label="ページ レイアウト">${ic('vpage')}</button><button class="v" aria-label="改ページ プレビュー">${ic('vbreak')}</button><button class="z" aria-label="縮小">−</button><input type="range" aria-label="ズーム" value="50"><button class="z" aria-label="拡大">+</button><output>100%</output>`);

/* ---------- taskbar ---------- */
define('task-bar', `
:host{display:flex;height:30px;background:#04060c;color:#fff;align-items:stretch}
.start{width:36px}
.search{display:flex;align-items:center;width:257px;background:#f1f1f1;color:#333;padding:0 10px 0 7px;gap:6px}
.search input{flex:1;min-width:0;font-size:10px}
.search input::placeholder{color:#444;opacity:1}
.apps{display:flex;margin-right:auto}
.apps button{width:37px}
.apps button:first-child{width:38px}
.apps .run{background:linear-gradient(#5aaee0,#5aaee0) bottom/31px 2px no-repeat}
.apps .cur{background-color:#33373c}
.tray{display:flex}
.tray button{width:25px}
.tray .wide{width:35px}
.ime{font-size:13px}
time{display:grid;align-content:center;text-align:center;width:46px;line-height:13px;white-space:nowrap;justify-content:center}
.nt{position:relative;border-right:1px solid #444;margin-right:2px}
.nt span{position:absolute;left:22px;top:11px;font-size:9px}
.tray .nt{width:42px}
`, `<button class="start" aria-label="スタート">${ic('win')}</button><div class="search">${ic('cortana')}<input aria-label="検索" placeholder="ここに入力して検索">${ic('mic')}</div>
<div class="apps">${[['taskview'], ['explorer', 'run'], ['ie', 'run'], ['store'], ['card'], ['mail', 'run'], ['slack', 'run'], ['excel', 'run cur'], ['word', 'run'], ['chrome', 'run']].map(([n, c]) => `<button class="${c || ''}" aria-label="${n}">${ic(n)}</button>`).join('')}</div>
<div class="tray"><button class="wide" aria-label="people">${ic('people')}</button>${['trayup', 'dropbox', 'battery', 'wifi', 'pen'].map(n => `<button aria-label="${n}">${ic(n)}</button>`).join('')}<button class="ime">A</button><time datetime="2018-03-01T20:03"><span>20:03</span><span>2018/03/01</span></time><button class="nt" aria-label="通知">${ic('notif')}<span>3</span></button></div>`);

define('excel-desktop', `
:host{display:flex;flex-direction:column;height:100vh}
title-bar,ribbon-tabs,ribbon-bar,formula-bar,sheet-tabs,status-bar,task-bar{flex:none}
.top{background:#217346}
`, `<div class="top"><title-bar></title-bar><ribbon-tabs></ribbon-tabs></div><ribbon-bar></ribbon-bar><formula-bar></formula-bar><sheet-grid></sheet-grid><sheet-tabs></sheet-tabs><status-bar></status-bar><task-bar></task-bar>`);
</script>
</body>
</html>
